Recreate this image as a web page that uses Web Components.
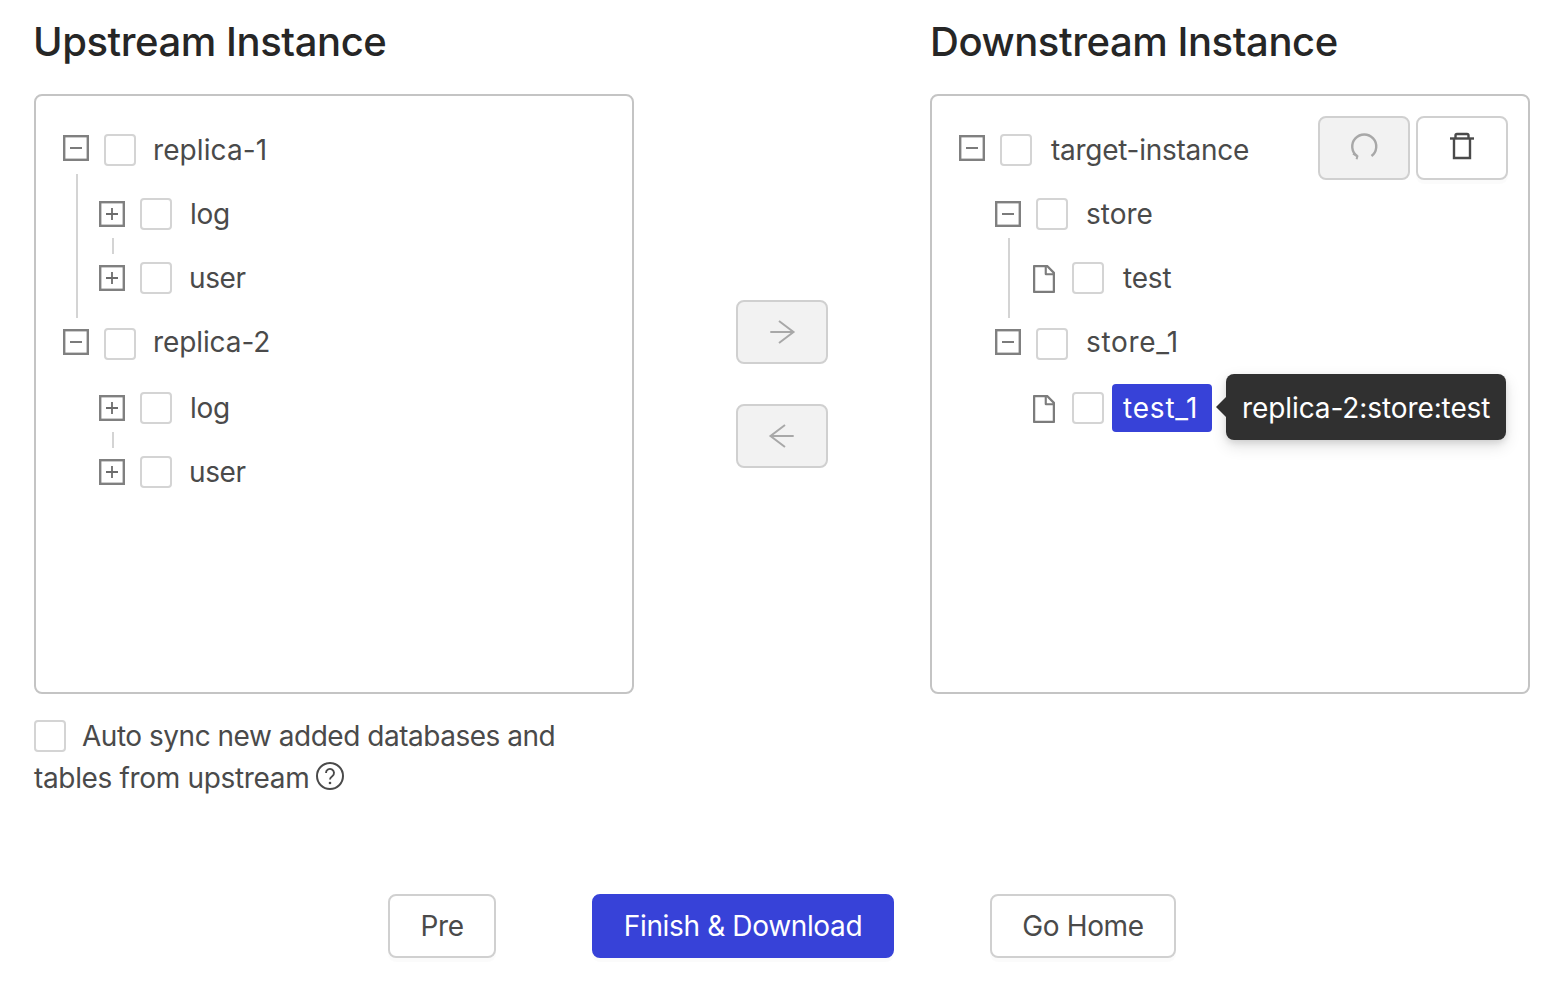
<!DOCTYPE html>
<html lang="en">
<head>
<meta charset="utf-8">
<title>Instances</title>
<style>
html,body{margin:0;padding:0;background:#fff}
body{font-family:Inter,"Liberation Sans",sans-serif;color:#4a4a4a;font-size:28px}
</style>
</head>
<body>
<sync-page>
  <sync-column slot="left" heading="Upstream Instance" style="--hm:-1px">
    <tree-panel>
      <tree-node label="replica-1" ls=".1" dx="-1" kind="minus" sw="17" line-top="56" line-height="144">
        <tree-node label="log" ls="-.3" kind="plus" line-top="56" line-height="16"></tree-node>
        <tree-node label="user" ls="-.4" dx="-1" kind="plus"></tree-node>
      </tree-node>
      <tree-node label="replica-2" ls="-.1" dx="-1" kind="minus" cb="18" row="66">
        <tree-node label="log" ls="-.3" kind="plus" line-top="56" line-height="16"></tree-node>
        <tree-node label="user" ls="-.4" dx="-1" kind="plus"></tree-node>
      </tree-node>
    </tree-panel>
    <sync-note slot="below"><span style="letter-spacing:-.48px">Auto sync new added databases and</span> <span style="letter-spacing:-.34px">tables from upstream</span></sync-note>
  </sync-column>

  <transfer-actions slot="middle"></transfer-actions>

  <sync-column slot="right" heading="Downstream Instance">
    <tree-panel>
      <panel-tools slot="tools"></panel-tools>
      <tree-node label="target-instance" ls="-.27" dx="1" kind="minus" sw="17">
        <tree-node label="store" ls="0" kind="minus" line-top="56" line-height="80">
          <tree-node label="test" ls="-.2" dx="1" kind="file"></tree-node>
        </tree-node>
        <tree-node label="store_1" ls=".7" kind="minus" cb="18" row="66">
          <tree-node label="test_1" ls=".8" kind="file" selected tooltip="replica-2:store:test"></tree-node>
        </tree-node>
      </tree-node>
    </tree-panel>
  </sync-column>

  <sync-footer slot="footer"></sync-footer>
</sync-page>

<script>
const tpl = (html) => { const t = document.createElement('template'); t.innerHTML = html; return t; };

class Comp extends HTMLElement {
  mount(t){ const r = this.attachShadow({mode:'open'}); r.appendChild(t.content.cloneNode(true)); return r; }
}

const pageT = tpl(`<style>
:host{display:block;box-sizing:border-box;width:1562px;height:992px;padding:14px 32px 0 34px}
.top{display:grid;grid-template-columns:600px 1fr 600px;height:796px}
.foot{margin-top:84px}
</style>
<div class="top"><slot name="left"></slot><slot name="middle"></slot><slot name="right"></slot></div>
<div class="foot"><slot name="footer"></slot></div>`);
class SyncPage extends Comp { constructor(){super();this.mount(pageT);} }
customElements.define('sync-page', SyncPage);

const colT = tpl(`<style>
:host{display:block;width:600px}
h2{margin:0 0 24px var(--hm,0);font:500 40px/56px Inter,"Liberation Sans",sans-serif;letter-spacing:-.43px;color:#262626;white-space:nowrap}
</style><h2></h2><slot></slot><slot name="below"></slot>`);
class SyncColumn extends Comp {
  constructor(){super();this.r=this.mount(colT);}
  connectedCallback(){this.r.querySelector('h2').textContent=this.getAttribute('heading');}
}
customElements.define('sync-column', SyncColumn);

const panelT = tpl(`<style>
:host{display:block;position:relative;box-sizing:border-box;width:600px;height:600px;border:2px solid #c4c4c4;border-radius:8px;padding:22px 0 0 27px;background:#fff}
</style><slot></slot><slot name="tools"></slot>`);
class TreePanel extends Comp { constructor(){super();this.mount(panelT);} }
customElements.define('tree-panel', TreePanel);

const boxT = tpl(`<style>
:host{display:inline-block;box-sizing:border-box;width:32px;height:32px;border:2px solid #d4d4d4;border-radius:4px;background:#fff;flex:none}
</style>`);
class CheckBox extends Comp { constructor(){super();this.mount(boxT);} }
customElements.define('check-box', CheckBox);

const icons = {
  minus:`<svg width="26" height="26" viewBox="0 0 26 26"><rect x="1.2" y="1.2" width="23.6" height="23.6" fill="#fff" stroke="#808080" stroke-width="2.4"/><path d="M7 13h12" stroke="#6c6c6c" stroke-width="1.8"/></svg>`,
  plus:`<svg width="26" height="26" viewBox="0 0 26 26"><rect x="1.2" y="1.2" width="23.6" height="23.6" fill="#fff" stroke="#808080" stroke-width="2.4"/><path d="M7 13h12M13 7v12" stroke="#6c6c6c" stroke-width="1.8"/></svg>`,
  file:`<svg width="32" height="32" viewBox="0 0 1024 1024" style="margin:-2px -3px 0" fill="#7c7c7c"><path d="M854.6 288.6L639.4 73.4c-6-6-14.1-9.4-22.6-9.4H192c-17.7 0-32 14.3-32 32v832c0 17.7 14.3 32 32 32h640c17.7 0 32-14.3 32-32V311.3c0-8.5-3.4-16.7-9.4-22.7zM790.2 326H602V137.8L790.2 326zm1.8 562H232V136h302v216a42 42 0 0042 42h216v494z"/></svg>`
};

const nodeT = tpl(`<style>
:host{display:block;position:relative}
.row{display:flex;align-items:flex-start;height:var(--row,64px);white-space:nowrap}
.sw{flex:none;width:26px;height:26px;display:flex;justify-content:center;margin-top:var(--sw,19px)}
.sw svg{display:block;flex:none}
check-box{margin:var(--cb,16px) 8px 0 15px}
.label{position:relative;margin-top:8px;height:48px;line-height:49px;padding:0 10px;border-radius:4px;color:#4a4a4a}
:host([selected]) .label{background:#3742d8;color:#fff;padding:0 14px 0 11px}
.kids{padding-left:36px}
.line{position:absolute;left:13px;width:2px;background:#d4d4d4;display:none}
.tip{display:none;position:absolute;left:calc(100% + 14px);top:-10px;height:66px;line-height:69px;padding:0 16px;background:#303030;color:#fff;border-radius:8px;letter-spacing:-.1px;box-shadow:0 6px 16px rgba(0,0,0,.12),0 3px 6px rgba(0,0,0,.1);white-space:nowrap}
.tip::before{content:"";position:absolute;left:-10px;top:23px;width:0;height:0;border-style:solid;border-width:10px 10px 10px 0;border-color:transparent #303030 transparent transparent}
</style>
<div class="line"></div>
<div class="row"><span class="sw"></span><check-box></check-box><span class="label"><span class="txt"></span><span class="tip"></span></span></div>
<div class="kids"><slot></slot></div>`);
class TreeNode extends Comp {
  constructor(){super();this.r=this.mount(nodeT);}
  connectedCallback(){
    const g=(a)=>this.getAttribute(a), r=this.r;
    const t0=r.querySelector('.txt');
    t0.textContent=g('label');
    t0.style.letterSpacing=(g('ls')||0)+'px';
    t0.style.marginLeft=(g('dx')||0)+'px';
    r.querySelector('.sw').innerHTML=icons[g('kind')]||'';
    this.style.setProperty('--sw',(g('sw')||19)+'px');
    this.style.setProperty('--cb',(g('cb')||16)+'px');
    this.style.setProperty('--row',(g('row')||64)+'px');
    if(g('line-height')){const l=r.querySelector('.line');l.style.display='block';l.style.top=g('line-top')+'px';l.style.height=g('line-height')+'px';}
    if(g('tooltip')){const t=r.querySelector('.tip');t.style.display='block';t.textContent=g('tooltip');}
  }
}
customElements.define('tree-node', TreeNode);

const btnT = tpl(`<style>
:host{display:inline-flex;align-items:center;justify-content:center;box-sizing:border-box;height:64px;padding:0 30px;border:2px solid #d0d0d0;border-radius:8px;background:#fff;color:#4a4a4a;font-size:28px;letter-spacing:-.35px;box-shadow:0 4px 0 rgba(0,0,0,.015);white-space:nowrap;flex:none}
:host([disabled]){background:#f2f2f2;box-shadow:none}
:host([primary]){background:#3742d8;border-color:#3742d8;color:#fff}
:host([icon]){width:92px;padding:0}
svg{display:block}
</style><slot></slot>`);
class UiButton extends Comp { constructor(){super();this.mount(btnT);} }
customElements.define('ui-button', UiButton);

const actT = tpl(`<style>
:host{display:flex;flex-direction:column;align-items:center;gap:40px;padding-top:286px}
</style>
<ui-button icon disabled><svg width="28" height="28" viewBox="0 0 28 28" fill="none" stroke="#a8a8a8" stroke-width="2"><path d="M2.3 14H25.5M11 3L25.5 14 11 25"/></svg></ui-button>
<ui-button icon disabled><svg width="28" height="28" viewBox="0 0 28 28" fill="none" stroke="#a8a8a8" stroke-width="2"><path d="M25.7 14H2.5M17 3L2.5 14 17 25"/></svg></ui-button>`);
class TransferActions extends Comp { constructor(){super();this.mount(actT);} }
customElements.define('transfer-actions', TransferActions);

const toolT = tpl(`<style>
:host{position:absolute;top:20px;right:20px;display:flex;gap:6px}
</style>
<ui-button icon disabled><svg width="28" height="28" viewBox="0 0 28 28" fill="none" stroke="#a8a8a8" stroke-width="2.4" style="margin-top:-4px"><path d="M21.5 24a12 12 0 1 0-14.5 0"/><path d="M3 21.6l4.4 2.6-.8 3" stroke-width="2"/></svg></ui-button>
<ui-button icon><svg width="28" height="28" viewBox="0 0 28 28" fill="none" stroke="#4a4a4a" stroke-width="2.4" style="margin-top:-4px"><path d="M2 6.5h24"/><path d="M7.5 6V3.5A1.5 1.5 0 0 1 9 2h10a1.5 1.5 0 0 1 1.5 1.5V6"/><path d="M6 6.5V26h16V6.5"/></svg></ui-button>`);
class PanelTools extends Comp { constructor(){super();this.mount(toolT);} }
customElements.define('panel-tools', PanelTools);

const noteT = tpl(`<style>
:host{display:block;margin-top:21px;line-height:42px;color:#4a4a4a;width:600px}
check-box{vertical-align:-6px;margin-right:16px}
svg{vertical-align:-2px;margin-left:-1.5px}
</style>
<check-box></check-box><slot></slot>
<svg width="28" height="28" viewBox="0 0 28 28" fill="none" stroke="#4a4a4a" stroke-width="2"><circle cx="14" cy="14" r="13"/><path d="M10 11a4 4 0 1 1 6.3 3.2c-1.4 1-2.3 1.6-2.3 3.3" stroke-width="1.9"/><circle cx="14" cy="21" r="1.3" fill="#4a4a4a" stroke="none"/></svg>`);
class SyncNote extends Comp { constructor(){super();this.mount(noteT);} }
customElements.define('sync-note', SyncNote);

const footT = tpl(`<style>
:host{display:flex;justify-content:center;gap:96px}
</style>
<ui-button style="width:108px;padding:0">Pre</ui-button><ui-button primary style="width:302px;padding:0">Finish &amp; Download</ui-button><ui-button style="width:186px;padding:0">Go Home</ui-button>`);
class SyncFooter extends Comp { constructor(){super();this.mount(footT);} }
customElements.define('sync-footer', SyncFooter);
</script>
</body>
</html>
